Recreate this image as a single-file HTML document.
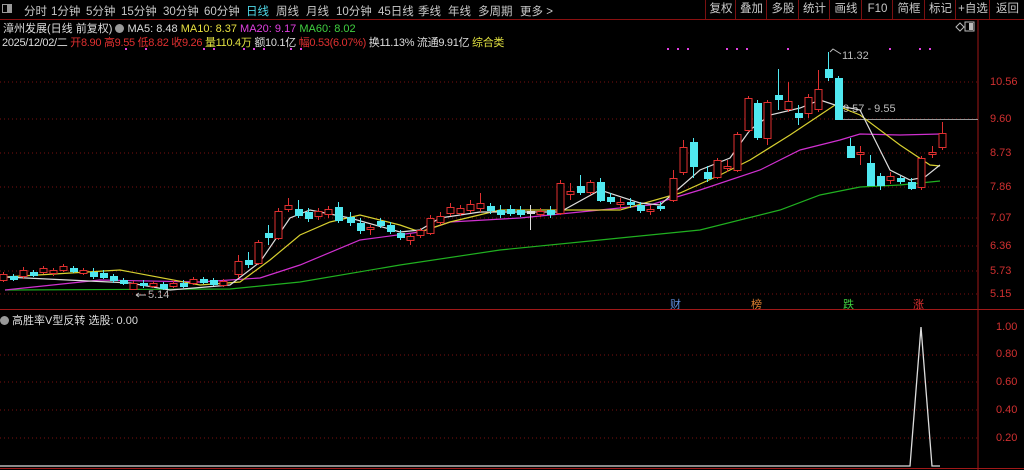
<!DOCTYPE html>
<html><head><meta charset="utf-8"><style>
body{margin:0;background:#000;width:1024px;height:470px;overflow:hidden;font-family:"Liberation Sans","Noto Sans CJK SC",sans-serif;}
#top{position:absolute;left:0;top:0;width:1024px;height:19px;border-bottom:1px solid #8a1010;font-size:11.5px;color:#c8c8c8;}
#top span{position:absolute;top:3px;white-space:nowrap}
.btn{position:absolute;top:0;height:19px;border-left:1px solid #7a1010;font-size:11.5px;color:#c8c8c8;text-align:center;line-height:19px}
.t{position:absolute;white-space:nowrap;font-size:11px}
.ax{position:absolute;left:990px;font-size:11px;color:#d03030}
</style></head><body>
<div id="top">
<span style="left:2px;top:4px;width:10px;height:9px;border:1px solid #999;box-sizing:border-box;background:linear-gradient(90deg,#000 50%,#999 50%)"></span>
<span style="left:24px">分时</span><span style="left:51px">1分钟</span><span style="left:86px">5分钟</span><span style="left:121px">15分钟</span><span style="left:163px">30分钟</span><span style="left:204px">60分钟</span><span style="left:246px;color:#4fd8e8">日线</span><span style="left:276px">周线</span><span style="left:306px">月线</span><span style="left:336px">10分钟</span><span style="left:378px">45日线</span><span style="left:418px">季线</span><span style="left:448px">年线</span><span style="left:478px">多周期</span><span style="left:520px">更多 &gt;</span>
</div>
<div class="btn" style="left:705px;width:30px">复权</div><div class="btn" style="left:735px;width:31px">叠加</div><div class="btn" style="left:766px;width:32px">多股</div><div class="btn" style="left:798px;width:31px">统计</div><div class="btn" style="left:829px;width:32px">画线</div><div class="btn" style="left:861px;width:31px">F10</div><div class="btn" style="left:892px;width:32px">简框</div><div class="btn" style="left:924px;width:31px">标记</div><div class="btn" style="left:955px;width:34px">+自选</div><div class="btn" style="left:989px;width:35px">返回</div>
<div class="t" style="left:3px;top:20px;color:#ddd">漳州发展(日线 前复权) <span style="display:inline-block;width:9px;height:9px;border-radius:50%;background:#999;vertical-align:-1px"></span> MA5: 8.48 <span style="color:#e8e040">MA10: 8.37</span> <span style="color:#e040e0">MA20: 9.17</span> <span style="color:#40d040">MA60: 8.02</span></div>
<div class="t" style="left:2px;top:34px;color:#ddd;letter-spacing:-0.3px">2025/12/02/二 <span style="color:#e03030">开8.90 高9.55 低8.82 收9.26</span> <span style="color:#e0e040">量110.4万</span> 额10.1亿 <span style="color:#e03030">幅0.53(6.07%)</span> 换11.13% 流通9.91亿 <span style="color:#e0e040">综合类</span></div>
<div class="t" style="left:0;top:312px;color:#ddd"><span style="display:inline-block;width:9px;height:9px;border-radius:50%;background:#999;vertical-align:-1px"></span> 高胜率V型反转 选股: 0.00</div>
<div class="ax" style="top:76px">10.56</div><div class="ax" style="top:113px">9.60</div><div class="ax" style="top:147px">8.73</div><div class="ax" style="top:181px">7.86</div><div class="ax" style="top:212px">7.07</div><div class="ax" style="top:240px">6.36</div><div class="ax" style="top:265px">5.73</div><div class="ax" style="top:288px">5.15</div>
<div class="ax" style="top:321px;left:996px">1.00</div><div class="ax" style="top:348px;left:996px">0.80</div><div class="ax" style="top:376px;left:996px">0.60</div><div class="ax" style="top:404px;left:996px">0.40</div><div class="ax" style="top:432px;left:996px">0.20</div>
<div class="t" style="left:843px;top:103px;color:#bbb">9.57 - 9.55</div>
<div class="t" style="left:842px;top:50px;color:#bbb">11.32</div>
<div class="t" style="left:148px;top:289px;color:#bbb">5.14</div>
<div class="t" style="left:670px;top:296px;color:#6090e0">财</div><div class="t" style="left:751px;top:296px;color:#e08030">榜</div><div class="t" style="left:843px;top:296px;color:#40d040">跌</div><div class="t" style="left:913px;top:296px;color:#e03030">涨</div>
<svg id="s" width="1024" height="470" style="position:absolute;left:0;top:0" xmlns="http://www.w3.org/2000/svg">
<g stroke="#7a1010" stroke-dasharray="1 3">
<line x1="0" y1="82" x2="978" y2="82"/><line x1="0" y1="119" x2="978" y2="119"/><line x1="0" y1="153" x2="978" y2="153"/><line x1="0" y1="187" x2="978" y2="187"/><line x1="0" y1="218" x2="978" y2="218"/><line x1="0" y1="246" x2="978" y2="246"/><line x1="0" y1="271" x2="978" y2="271"/><line x1="0" y1="294" x2="978" y2="294"/>
<line x1="0" y1="355" x2="978" y2="355"/><line x1="0" y1="382" x2="978" y2="382"/><line x1="0" y1="410" x2="978" y2="410"/><line x1="0" y1="438" x2="978" y2="438"/>
</g>
<line x1="978" y1="20" x2="978" y2="470" stroke="#a01818"/>
<line x1="0" y1="309.5" x2="1024" y2="309.5" stroke="#a01818"/>
<line x1="0" y1="468.5" x2="1024" y2="468.5" stroke="#a01818"/>
<line x1="843" y1="119.5" x2="978" y2="119.5" stroke="#999"/>
<path d="M830 52 l3 -3 l8 5" stroke="#bbb" fill="none"/>
<path d="M136 295 h10 M136 295 l3 -2 M136 295 l3 2" stroke="#bbb" fill="none"/>
<path d="M956 27 l4 -4 l4 4 l-4 4z" stroke="#bbb" fill="none"/>
<rect x="965" y="22" width="9" height="9" stroke="#bbb" fill="none"/><rect x="969" y="23" width="4" height="7" fill="#bbb"/>
<g id="g"></g>
<polyline points="0,466 910,466 921,327 932,466 940,466" stroke="#ddd" fill="none" stroke-width="1.3"/>
</svg>
<script>
var g=document.getElementById('g'),h='';
function pl(p,c){h+='<polyline points="'+p+'" stroke="'+c+'" fill="none" stroke-width="1.2"/>';}
pl("5,290 230,289 300,282 400,265 500,250 600,240 700,230 780,210 820,195 860,187 900,185 940,181","#20b020");
pl("5,290 100,280 200,282 260,278 300,265 360,240 420,232 450,222 520,218 600,210 650,205 700,190 760,170 800,150 840,140 860,134 900,135 940,134","#d030d0");
pl("5,277 120,270 200,285 240,282 270,260 300,235 330,222 360,215 400,225 420,232 450,222 500,210 560,210 620,210 680,193 720,175 750,160 790,135 820,115 835,105 860,115 900,145 930,165 940,166","#d8d030");
pl("5,277 130,283 170,290 230,285 260,262 290,218 310,210 350,218 400,232 420,230 440,218 480,212 520,212 560,212 600,190 640,203 660,205 700,170 730,158 750,130 770,115 800,108 820,100 835,105 860,110 880,150 890,170 910,180 925,177 940,165","#ddd");
// candles: x, top, bottom, wickTop, wickBot, red?
var C=[[3,274,280,272,282,1],[13,276,279,274,281,0],[23,270,276,267,279,1],[33,272,275,270,277,0],[43,268,272,266,274,1],[53,270,273,268,276,1],[63,266,270,264,272,1],[73,268,271,266,273,0],[83,270,273,268,275,1],[93,272,276,268,279,0],[103,273,277,270,279,0],[113,276,280,274,283,0],[123,280,283,278,285,0],[133,283,289,281,290,1],[143,283,285,280,288,0],[153,283,286,281,288,1],[163,284,288,282,290,0],[173,283,286,280,288,1],[183,283,286,280,288,0],[193,279,283,277,285,1],[203,279,282,277,284,0],[213,280,284,278,286,0],[223,281,285,279,287,1],[238,261,274,255,278,1],[248,260,264,252,268,0],[258,242,263,240,265,1],[268,233,237,225,245,0],[278,211,238,208,240,1],[288,205,209,198,212,1],[298,209,215,200,218,0],[308,212,218,208,222,0],[318,211,216,208,220,1],[328,209,214,206,218,1],[338,207,220,202,223,0],[350,217,222,212,226,0],[360,223,230,218,234,0],[370,227,229,225,235,1],[380,221,225,218,228,0],[390,225,231,222,234,0],[400,233,237,230,240,0],[410,236,240,234,245,1],[420,230,235,228,238,1],[430,218,233,215,235,1],[440,216,222,212,225,1],[450,207,213,203,216,1],[460,208,213,205,216,1],[470,204,210,200,213,1],[480,203,208,193,212,1],[490,206,210,203,214,0],[500,210,214,205,218,0],[510,209,213,205,216,0],[520,210,214,206,217,0],[530,211,213,205,230,2],[540,211,214,208,217,1],[550,210,214,206,218,0],[560,183,213,180,215,1],[570,191,194,183,200,1],[580,186,192,175,195,0],[590,182,192,180,195,1],[600,182,200,178,202,0],[610,197,201,193,204,0],[620,202,204,198,210,1],[630,202,204,198,208,0],[640,205,210,202,213,0],[650,209,211,205,215,1],[660,206,208,202,211,0],[673,178,200,170,202,1],[683,147,172,140,175,1],[693,142,166,138,178,0],[707,172,178,166,182,0],[717,160,177,158,179,1],[727,166,168,160,172,1],[737,134,170,132,172,1],[748,98,130,96,132,1],[757,103,137,100,140,0],[767,102,138,100,145,1],[778,95,99,69,110,0],[788,101,109,82,112,1],[798,113,117,105,125,0],[808,97,113,94,118,1],[818,89,109,70,112,1],[828,69,77,52,81,0],[838,78,119,76,120,0],[850,146,157,138,158,0],[860,152,154,146,165,1],[870,163,185,155,186,0],[880,176,185,173,190,0],[890,176,180,172,184,1],[900,178,181,176,184,0],[911,182,188,178,190,0],[921,158,187,156,190,1],[932,152,154,146,158,1],[942,133,147,122,150,1]];
C.forEach(function(c){var col=c[5]==1?'#e03030':(c[5]==2?'#ddd':'#50e8f0');
h+='<line x1="'+(c[0]+.5)+'" y1="'+c[3]+'" x2="'+(c[0]+.5)+'" y2="'+c[4]+'" stroke="'+col+'"/>';
var hh=Math.max(1,c[2]-c[1]);
if(c[5]==1)h+='<rect x="'+(c[0]-3)+'" y="'+(c[1]+.5)+'" width="7" height="'+hh+'" fill="#000" stroke="'+col+'"/>';
else h+='<rect x="'+(c[0]-3)+'" y="'+c[1]+'" width="8" height="'+(hh+1)+'" fill="'+col+'"/>';});
[125,145,203,213,243,253,263,290,300,667,677,687,726,736,746,787,889,919,929].forEach(function(x){h+='<rect x="'+x+'" y="48" width="2" height="2" fill="#e040e0"/>';});
g.innerHTML=h;
</script>
</body></html>
